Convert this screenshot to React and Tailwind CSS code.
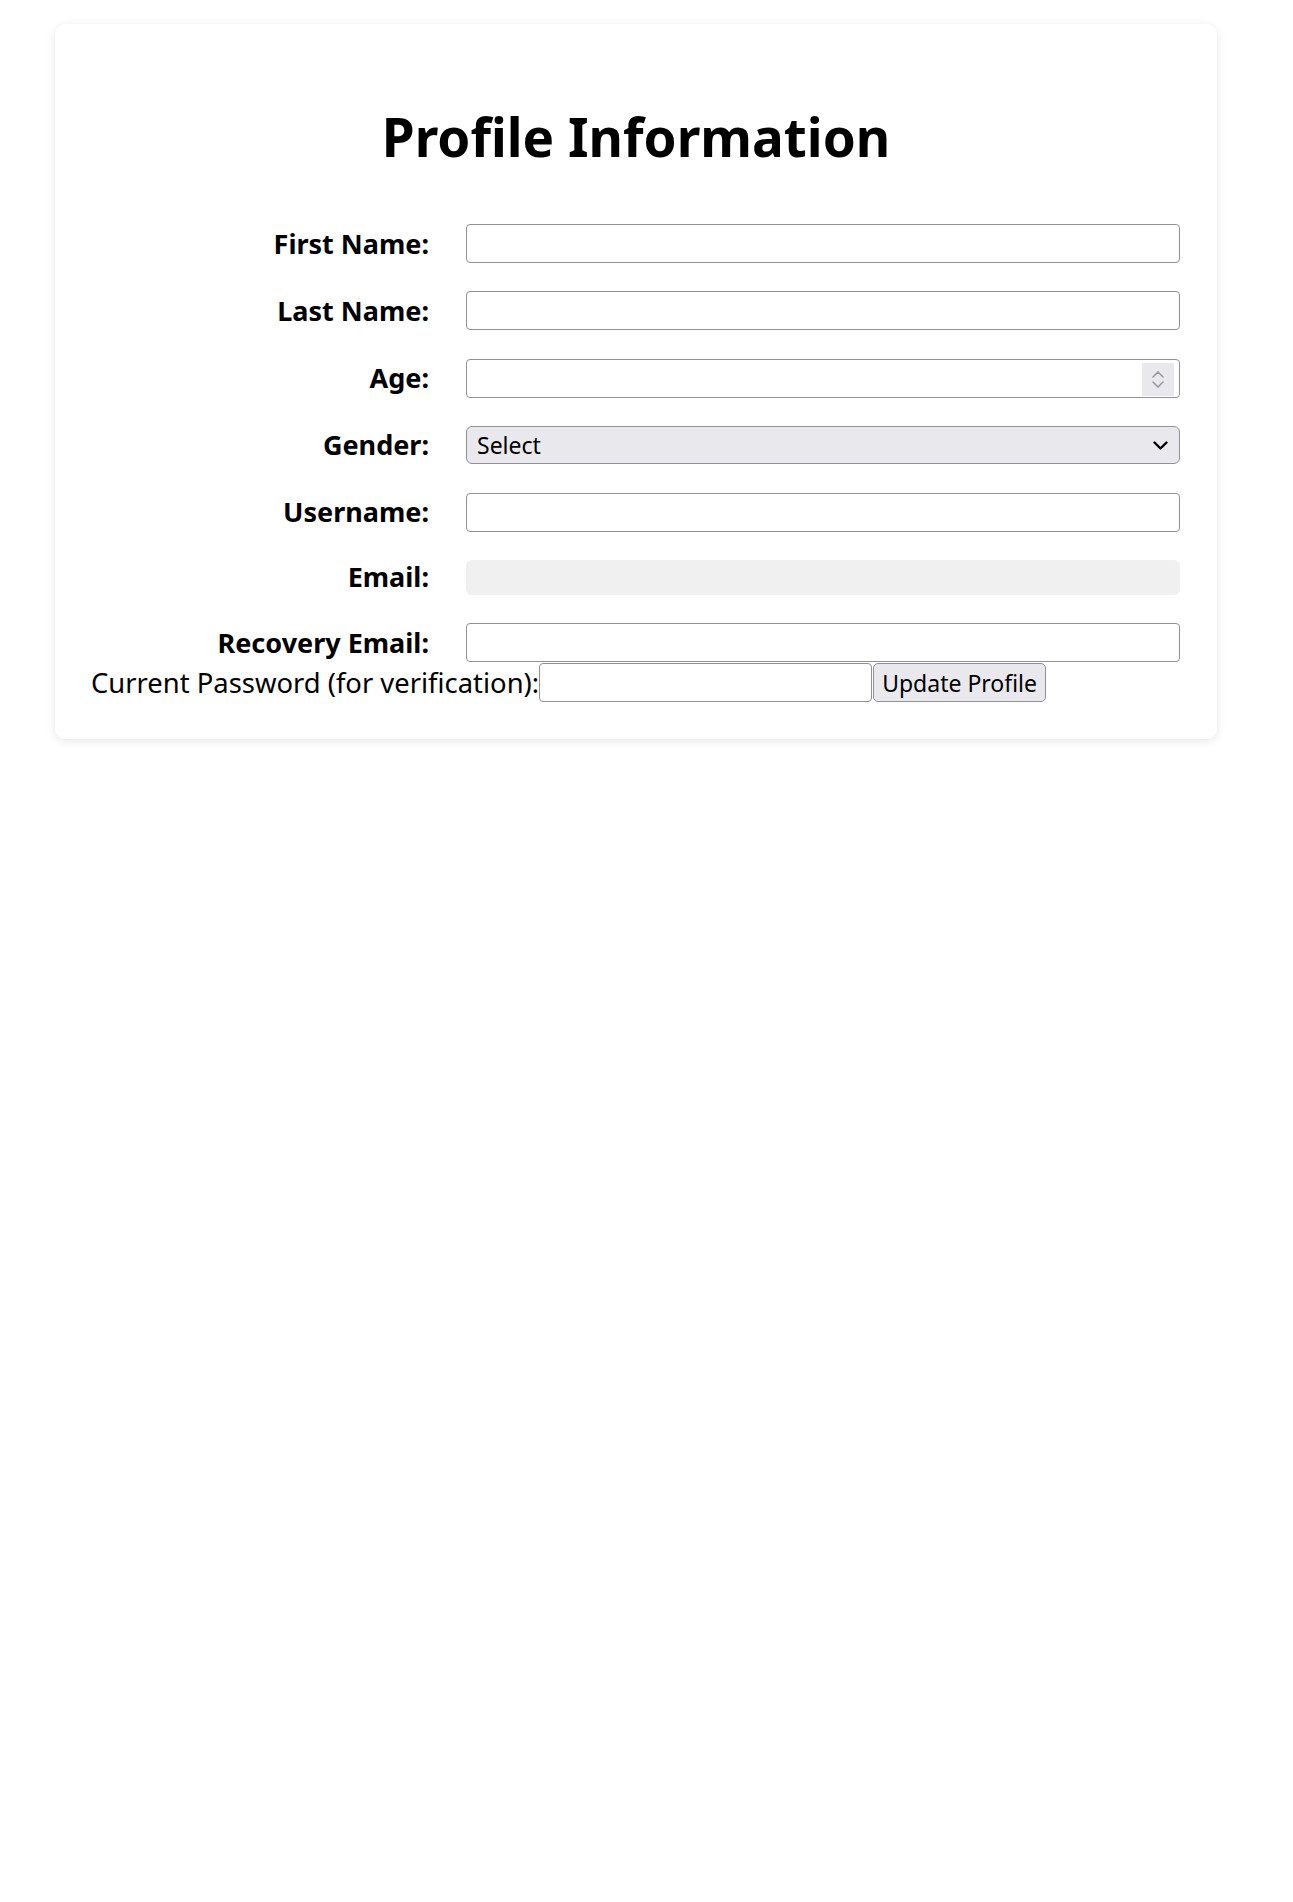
import React from "react";

function Spinner() {
  return (
    <div className="absolute right-[6px] top-[4px] w-[32px] h-[33px] bg-[#e9e9ed] flex flex-col items-center justify-center gap-[3px]">
      <svg width="12" height="7" viewBox="0 0 12 7" fill="none" stroke="#9b9ba6" strokeWidth="1.6" strokeLinecap="round"><path d="M1 6 L6 1 L11 6" /></svg>
      <svg width="12" height="7" viewBox="0 0 12 7" fill="none" stroke="#9b9ba6" strokeWidth="1.6" strokeLinecap="round"><path d="M1 1 L6 6 L11 1" /></svg>
    </div>
  );
}

const inputCls = "w-full h-[39px] border border-[#8f8f9d] rounded-[4px] bg-white px-2 text-[23px] outline-none";

export default function App() {
  const rows = [
    { label: "First Name:", type: "text" },
    { label: "Last Name:", type: "text" },
    { label: "Age:", type: "number" },
    { label: "Gender:", type: "select" },
    { label: "Username:", type: "text" },
    { label: "Email:", type: "email" },
    { label: "Recovery Email:", type: "text" },
  ];
  return (
    <div className="min-h-[1902px] bg-white pt-[24px] text-black" style={{ fontFamily: '"Noto Sans", sans-serif' }}>
      <div className="ml-[55px] w-[1162px] bg-white rounded-[10px] shadow-[0_2px_10px_rgba(0,0,0,0.1)] px-[36px] pt-[78px] pb-[37px]">
        <h1 className="text-center text-[53px] font-bold leading-[70px] mb-[52px]">Profile Information</h1>
        <div className="grid grid-cols-[338px_714px] gap-x-[37px] gap-y-[28.4px] items-center">
          {rows.map((r) => (
            <React.Fragment key={r.label}>
              <label className="text-right font-bold text-[27px] leading-[32px]">{r.label}</label>
              {r.type === "select" ? (
                <div className="relative h-[38px] border border-[#8f8f9d] rounded-[6px] bg-[#e9e9ed] flex items-center pl-[10px] text-[23px]">
                  <span>Select</span>
                  <svg className="absolute right-[11px] top-[14px]" width="15" height="9" viewBox="0 0 15 9" fill="none" stroke="#000" strokeWidth="2.4" strokeLinecap="round" strokeLinejoin="round"><path d="M1.5 1.5 L7.5 7.5 L13.5 1.5" /></svg>
                </div>
              ) : r.type === "email" ? (
                <div className="h-[35px] rounded-[6px] bg-[#f0f0f0]" />
              ) : r.type === "number" ? (
                <div className="relative">
                  <input className={inputCls} />
                  <Spinner />
                </div>
              ) : (
                <input className={inputCls} />
              )}
            </React.Fragment>
          ))}
        </div>
        <div className="flex items-center h-[39px] mt-[1px] text-[27.4px]">
          <span>Current Password (for verification):</span>
          <input type="password" className="w-[333px] h-[39px] border border-[#8f8f9d] rounded-[4px] bg-white px-2 outline-none" />
          <button className="h-[39px] ml-[1px] px-[8px] border border-[#8f8f9d] rounded-[5px] bg-[#e9e9ed] text-[23px]">Update Profile</button>
        </div>
      </div>
    </div>
  );
}
